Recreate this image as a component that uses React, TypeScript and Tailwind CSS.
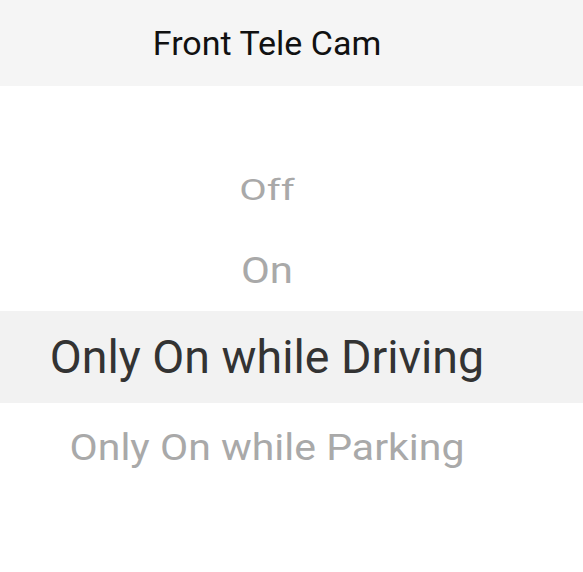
const options = [
  { label: 'Off', row: 'h-[80px]', text: 'text-[40px] text-[#a9a9a9] scale-y-[0.74]' },
  { label: 'On', row: 'h-[81px]', text: 'text-[42px] text-[#a9a9a9] scale-y-[0.86]' },
  { label: 'Only On while Driving', row: 'h-[92px] bg-[#f2f2f2]', text: 'text-[46.5px] text-[#333333]' },
  { label: 'Only On while Parking', row: 'h-[88px]', text: 'text-[41px] text-[#a9a9a9] scale-y-[0.9]' },
];

export default function App() {
  return (
    <div className="w-[583px] h-[572px] bg-white overflow-hidden font-['Roboto',sans-serif]">
      <div className="h-[86px] bg-[#f5f5f5] flex items-center justify-center pr-[49px] pb-[1px]">
        <h1 className="text-[34px] text-[#111111] leading-none">Front Tele Cam</h1>
      </div>

      <div className="pt-[64px]">
        {options.map((opt) => (
          <div key={opt.label} className={`flex items-center justify-center pr-[49px] ${opt.row}`}>
            <span className={`leading-none whitespace-nowrap ${opt.text}`}>{opt.label}</span>
          </div>
        ))}
      </div>
    </div>
  );
}
